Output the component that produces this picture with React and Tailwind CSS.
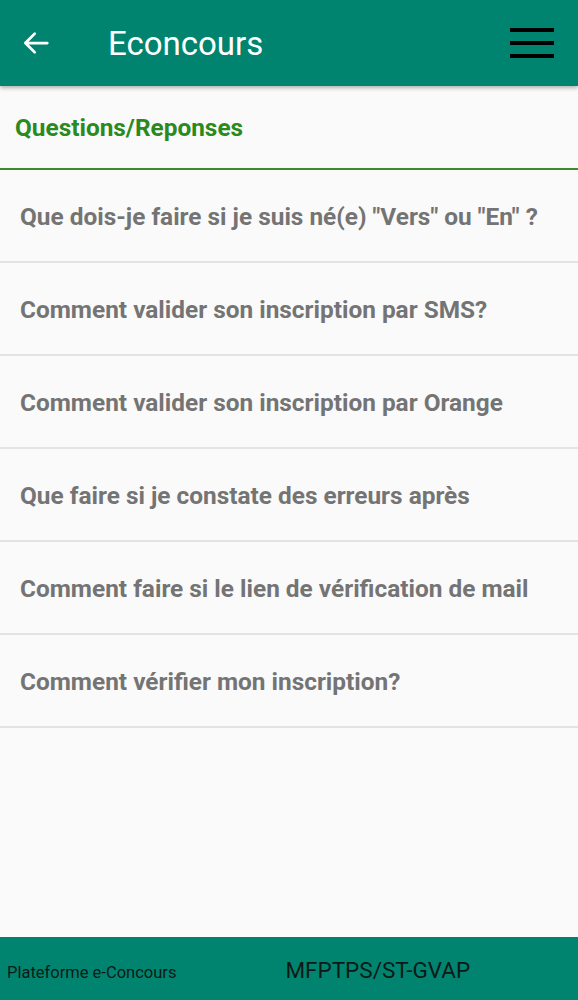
const questions = [
  'Que dois-je faire si je suis né(e) "Vers" ou "En" ?',
  'Comment valider son inscription par SMS?',
  'Comment valider son inscription par Orange',
  'Que faire si je constate des erreurs après',
  'Comment faire si le lien de vérification de mail',
  'Comment vérifier mon inscription?',
];

export default function App() {
  return (
    <div
      className="flex flex-col h-[1000px] bg-[#fafafa]"
      style={{ fontFamily: 'Roboto, "Liberation Sans", sans-serif' }}
    >
      <header className="relative z-10 flex items-center h-[86px] shrink-0 bg-[#00846f] shadow-[0_2px_4px_rgba(0,0,0,0.3)]">
        <svg className="ml-[21px] w-[30px] h-[30px]" viewBox="0 0 24 24" fill="none" stroke="white" strokeWidth="2.2" strokeLinecap="round" strokeLinejoin="round">
          <path d="M21 12H3.5M11 4.5 3.5 12l7.5 7.5" />
        </svg>
        <h1 className="ml-[57px] text-[33px] text-white leading-none">Econcours</h1>
        <div className="ml-auto mr-[24px] flex flex-col gap-[9px]">
          <span className="block w-[44px] h-[4px] bg-black" />
          <span className="block w-[44px] h-[4px] bg-black" />
          <span className="block w-[44px] h-[4px] bg-black" />
        </div>
      </header>

      <main className="flex-1">
        <div className="flex items-center h-[84px] px-[15px] pt-[2px] border-b-2 border-[#3d8b2f]">
          <h2 className="text-[24.4px] font-bold text-[#2a8a1e]">Questions/Reponses</h2>
        </div>
        <ul>
          {questions.map(q => (
            <li
              key={q}
              className="flex items-center h-[93px] px-[20px] pt-[3px] border-b-2 border-[#e3e3e3]"
            >
              <span className="text-[24.4px] font-bold text-[#747474] whitespace-nowrap">{q}</span>
            </li>
          ))}
        </ul>
      </main>

      <footer className="flex items-center h-[63px] shrink-0 bg-[#00846f] text-[#0b1a17]">
        <span className="ml-[7px] pt-[10px] text-[16.5px]">Plateforme e-Concours</span>
        <span className="ml-[109px] pt-[4px] text-[22.5px]">MFPTPS/ST-GVAP</span>
      </footer>
    </div>
  );
}
